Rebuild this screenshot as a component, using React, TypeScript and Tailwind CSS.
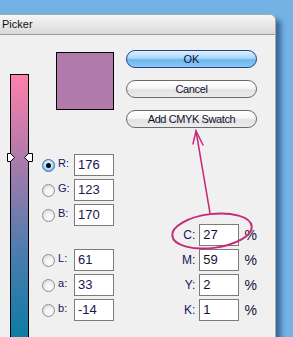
const rgb = [
  { k: "R", v: "176", on: true },
  { k: "G", v: "123" },
  { k: "B", v: "170" },
];
const lab = [
  { k: "L", v: "61" },
  { k: "a", v: "33" },
  { k: "b", v: "-14" },
];
const cmyk = [
  { k: "C", v: "27" },
  { k: "M", v: "59" },
  { k: "Y", v: "2" },
  { k: "K", v: "1" },
];

function Radio({ on }: { on?: boolean }) {
  return (
    <span
      className={
        on
          ? "w-[13px] h-[13px] rounded-full border border-[#2f6fb4] bg-[radial-gradient(circle_at_50%_40%,#ffffff_0%,#bfe0fa_45%,#4f9be0_100%)] flex items-center justify-center shrink-0"
          : "w-[13px] h-[13px] rounded-full border border-[#8e8e8e] bg-[radial-gradient(circle_at_60%_65%,#ffffff_0%,#f2f2f2_40%,#cfcfcf_100%)] shrink-0"
      }
    >
      {on && <span className="w-[5px] h-[5px] rounded-full bg-black" />}
    </span>
  );
}

function Field({ k, v, on }: { k: string; v: string; on?: boolean }) {
  return (
    <div className="flex items-center h-[22px]">
      <Radio on={on} />
      <span className="ml-[3px] w-[16px] text-[11px] text-[#14145a] -mt-[3px]">{k}:</span>
      <div className="w-[40px] h-[22px] border border-[#7b7b7b] bg-white text-[13px] leading-[20px] pl-[3px] text-[#1a1650]">
        {v}
      </div>
    </div>
  );
}

function Btn({ label, primary }: { label: string; primary?: boolean }) {
  return (
    <div
      className={
        primary
          ? "h-[18px] rounded-full border border-[#24408f] bg-[linear-gradient(to_bottom,#dff0fd_0%,#a9d6f7_45%,#6cb6ef_55%,#8cc8f4_100%)] text-[11px] leading-[16px] text-center text-[#101030]"
          : "h-[18px] rounded-full border border-[#6a6a6a] bg-[linear-gradient(to_bottom,#ffffff_0%,#f6f6f6_45%,#e2e2e2_55%,#ececec_100%)] text-[11px] leading-[16px] text-center text-[#101030] tracking-[-0.4px]"
      }
    >
      {label}
    </div>
  );
}

export default function App() {
  return (
    <div className="relative w-[293px] h-[337px] overflow-hidden bg-[#74b1e5] pt-[14px] font-['Liberation_Sans',Arial,sans-serif]">
      <div className="w-[276px] h-[330px] bg-[#f0f0f0] rounded-tr-[6px] border-t border-r border-[#a9a9a9] shadow-[5px_5px_5px_rgba(20,55,100,0.6)]">
        <div className="h-[20px] border-b border-[#9a9a9a] rounded-tr-[6px] bg-[linear-gradient(to_bottom,#f7f7f7,#d9d9d9)] pl-[2px] text-[11px] leading-[19px] text-[#101010]">
          Picker
        </div>
        <div className="flex items-start pl-[10px]">
          <div className="relative w-[19px] h-[270px] mt-[39px] border border-black bg-[linear-gradient(to_bottom,#ff80ac_0%,#b07baa_30%,#4c7caf_66%,#0a7ca3_100%)]">
            <svg className="absolute left-[-4px] top-[78px]" width="26" height="9" viewBox="0 0 26 9">
              <polygon points="0.5,0.5 3.5,0.5 7.5,4.5 3.5,8.5 0.5,8.5" fill="#fff" stroke="#000" />
              <polygon points="25.5,0.5 21.5,0.5 17.5,4.5 21.5,8.5 25.5,8.5" fill="#fff" stroke="#000" />
            </svg>
          </div>
          <div className="ml-[13px] w-[72px] flex flex-col">
            <div className="ml-[14px] mt-[17px] w-[58px] h-[58px] border border-black bg-[#b07baa]" />
            <div className="mt-[44px] flex flex-col gap-[3px]">
              {rgb.map((r) => (
                <Field key={r.k} {...r} />
              ))}
            </div>
            <div className="mt-[23px] flex flex-col gap-[3px]">
              {lab.map((r) => (
                <Field key={r.k} {...r} />
              ))}
            </div>
          </div>
          <div className="ml-[12px] w-[131px] flex flex-col">
            <div className="mt-[15px] flex flex-col gap-[12px]">
              <Btn label="OK" primary />
              <Btn label="Cancel" />
              <Btn label="Add CMYK Swatch" />
            </div>
            <div className="mt-[96px] flex flex-col gap-[3px]">
              {cmyk.map((r) => (
                <div key={r.k} className="flex items-center h-[22px]">
                  <span className="w-[71px] text-right text-[12px] text-[#14145a]">{r.k}:</span>
                  <div className="ml-[4px] w-[40px] h-[22px] border border-[#7b7b7b] bg-white text-[13px] leading-[20px] pl-[3px] text-[#12103a]">
                    {r.v}
                  </div>
                  <span className="ml-[6px] text-[14px] text-[#12103a]">%</span>
                </div>
              ))}
            </div>
          </div>
        </div>
      </div>
      <svg className="absolute inset-0 pointer-events-none" width="293" height="337" viewBox="0 0 293 337">
        <g stroke="#c8287a" fill="none" strokeLinecap="round">
          <ellipse cx="212" cy="231" rx="40" ry="17" strokeWidth="2" transform="rotate(-7 212 231)" />
          <line x1="210" y1="213" x2="196" y2="131" strokeWidth="1.5" />
          <polyline points="193,144 196,131 203,145" strokeWidth="1.5" />
        </g>
      </svg>
    </div>
  );
}
